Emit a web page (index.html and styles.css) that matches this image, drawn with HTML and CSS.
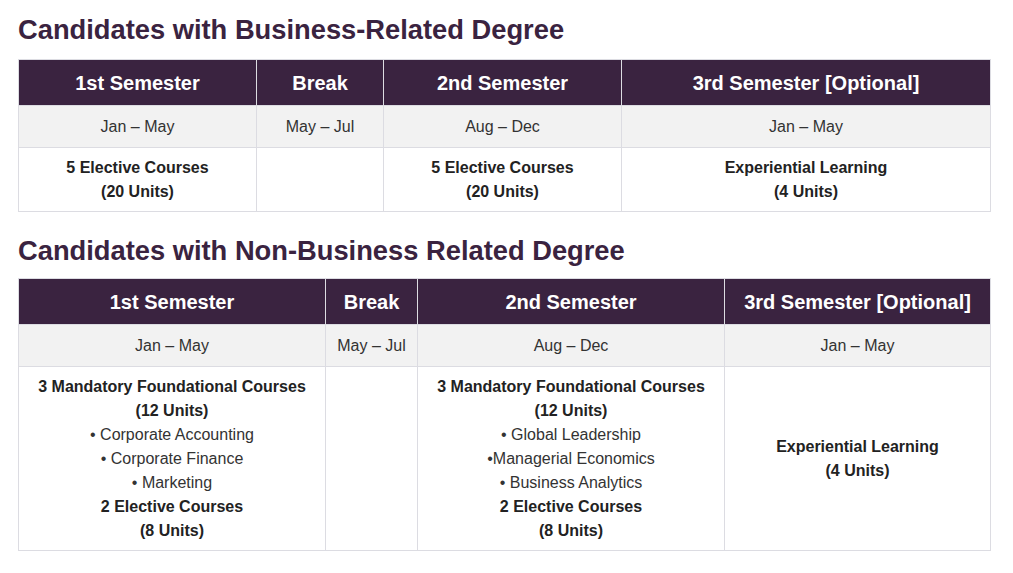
FILE: index.html
```html
<!DOCTYPE html>
<html lang="en">
<head>
<meta charset="utf-8">
<title>Program Schedule</title>
<link rel="stylesheet" href="styles.css">
</head>
<body>
<main class="page">
  <h2 class="title">Candidates with Business-Related Degree</h2>
  <table class="schedule schedule-a">
    <colgroup>
      <col class="c1"><col class="c2"><col class="c3"><col class="c4">
    </colgroup>
    <thead>
      <tr>
        <th>1st Semester</th>
        <th>Break</th>
        <th>2nd Semester</th>
        <th>3rd Semester [Optional]</th>
      </tr>
    </thead>
    <tbody>
      <tr class="dates">
        <td>Jan – May</td>
        <td>May – Jul</td>
        <td>Aug – Dec</td>
        <td>Jan – May</td>
      </tr>
      <tr class="courses">
        <td><strong>5 Elective Courses<br>(20 Units)</strong></td>
        <td></td>
        <td><strong>5 Elective Courses<br>(20 Units)</strong></td>
        <td><strong>Experiential Learning<br>(4 Units)</strong></td>
      </tr>
    </tbody>
  </table>

  <h2 class="title second">Candidates with Non-Business Related Degree</h2>
  <table class="schedule schedule-b">
    <colgroup>
      <col class="c1"><col class="c2"><col class="c3"><col class="c4">
    </colgroup>
    <thead>
      <tr>
        <th>1st Semester</th>
        <th>Break</th>
        <th>2nd Semester</th>
        <th>3rd Semester [Optional]</th>
      </tr>
    </thead>
    <tbody>
      <tr class="dates">
        <td>Jan – May</td>
        <td>May – Jul</td>
        <td>Aug – Dec</td>
        <td>Jan – May</td>
      </tr>
      <tr class="courses">
        <td><strong>3 Mandatory Foundational Courses<br>(12 Units)</strong><br>• Corporate Accounting<br>• Corporate Finance<br>• Marketing<br><strong>2 Elective Courses<br>(8 Units)</strong></td>
        <td></td>
        <td><strong>3 Mandatory Foundational Courses<br>(12 Units)</strong><br>• Global Leadership<br>•Managerial Economics<br>• Business Analytics<br><strong>2 Elective Courses<br>(8 Units)</strong></td>
        <td><strong>Experiential Learning<br>(4 Units)</strong></td>
      </tr>
    </tbody>
  </table>
</main>
</body>
</html>
```

FILE: styles.css
```css
html, body {
  margin: 0;
  padding: 0;
  background: #ffffff;
}

body {
  font-family: "Liberation Sans", Arial, Helvetica, sans-serif;
  color: #222222;
}

.page {
  padding: 13px 0 0 18px;
  width: 972px;
}

.title {
  margin: 0 0 13px 0;
  font-size: 27.3px;
  line-height: 33px;
  font-weight: 700;
  color: #3a2340;
}

.title.second {
  margin-top: 22px;
  margin-bottom: 11px;
}

.schedule {
  width: 972px;
  border-collapse: collapse;
  table-layout: fixed;
  text-align: center;
  font-size: 16px;
  line-height: 24px;
}

.schedule-a .c1 { width: 238px; }
.schedule-a .c2 { width: 127px; }
.schedule-a .c3 { width: 238px; }
.schedule-a .c4 { width: 369px; }

.schedule-b .c1 { width: 307px; }
.schedule-b .c2 { width: 92px; }
.schedule-b .c3 { width: 307px; }
.schedule-b .c4 { width: 266px; }

.schedule th,
.schedule td {
  border: 1px solid #dcdce2;
}

.schedule th {
  background: #3a2340;
  color: #ffffff;
  font-size: 20px;
  line-height: 28px;
  font-weight: 700;
  padding: 9px 6px 8px;
}

.schedule td {
  padding: 8px 6px 7px;
  vertical-align: middle;
}

.dates td {
  background: #f2f2f2;
  color: #333333;
  padding: 9px 6px 8px;
}

.courses td {
  background: #ffffff;
  color: #333333;
}

.courses strong {
  color: #222222;
  font-weight: 700;
}
```
